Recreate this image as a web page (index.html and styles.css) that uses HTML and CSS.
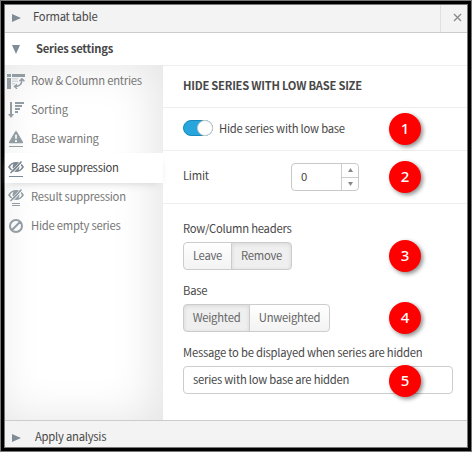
FILE: index.html
```html
<!DOCTYPE html>
<html lang="en">
<head>
<meta charset="utf-8">
<title>Series settings</title>
<link rel="stylesheet" href="styles.css">
</head>
<body>
<div class="frame">
  <header class="bar bar-top">
    <svg class="arrow" width="9" height="8" viewBox="0 0 9 8"><path d="M0 0 9 4 0 8z"/></svg>
    <span class="bar-title title-first">Format table</span>
    <button class="close" aria-label="Close"><svg width="9" height="9" viewBox="0 0 9 9"><path d="M1 1 8 8M8 1 1 8"/></svg></button>
  </header>
  <div class="bar bar-open">
    <svg class="arrow" width="8" height="9" viewBox="0 0 8 9"><path d="M0 0H8L4 9z"/></svg>
    <span class="bar-title title-open">Series settings</span>
  </div>
  <div class="body">
    <nav class="side">
      <div class="item"><svg class="icon" width="18" height="16" viewBox="0 0 18 16"><path class="f" d="M0 1h4v3H0zM5 1h13v3H5zM0 5h4v11H0z"/><path class="pale" d="M5 5h6v1.500H5zM5 7.500h6V9H5zM5 10h3v1.500H5z"/><path class="s thin" d="M8 13.500c4.500 0 7-2 7-7M10 11.200 7.500 13.500l2.500 2.300M12.500 8.300 15 5.700l2.400 2.600"/></svg><span class="label">Row &amp; Column entries</span></div>
      <div class="item"><svg class="icon" width="18" height="16" viewBox="0 0 18 16"><path class="f" d="M3 0h2v12h2l-3 4-3-4h2zM8 0h9v2H8zM8 3h7v2H8zM8 6h5v2H8zM8 9h3v2H8z"/></svg><span class="label">Sorting</span></div>
      <div class="item"><svg class="icon" width="18" height="18" viewBox="0 0 18 18"><path class="f" fill-rule="evenodd" d="M8 1.800Q9 .2 10 1.800L16 12q.6 1.200-.7 1.200H2.700Q1.400 13.200 2 12zM8 4.800 8.300 9h1.400L10 4.800zM8 10.200V12h2v-1.800z"/><path class="f" d="M2 16h14v1H2z"/></svg><span class="label">Base warning</span></div>
      <div class="item active"><svg class="icon" width="18" height="18" viewBox="0 0 18 18"><path class="f" fill-rule="evenodd" d="M1 8Q4 3 9 3T17 8Q14 13 9 13T1 8zM3 8Q4.300 10.500 6.400 11.200 4.600 8 6.400 4.800 4.300 5.500 3 8zM11.600 4.800Q13.400 8 11.600 11.200 13.700 10.500 15 8 13.700 5.500 11.600 4.800z"/><path class="cut" d="M3.300 13.200 13.500 2.300M5 14.700 15.200 3.800"/><path class="s" d="M3.500 14 14.500 2.500"/><path class="f" d="M2 17h14v1H2z"/></svg><span class="label">Base suppression</span></div>
      <div class="item"><svg class="icon" width="18" height="18" viewBox="0 0 18 18"><path class="f" fill-rule="evenodd" d="M1 7Q4 2 9 2T17 7Q14 12 9 12T1 7zM3 7Q4.300 9.500 6.400 10.200 4.600 7 6.400 3.800 4.300 4.500 3 7zM11.600 3.800Q13.400 7 11.600 10.200 13.700 9.500 15 7 13.700 4.500 11.600 3.800z"/><path class="cut" d="M3.300 12.200 13.500 1.300M5 13.700 15.200 2.800"/><path class="s" d="M3.500 13 14.500 1.500"/><path class="f" d="M5 15h8v1H5zM5 17h8v1H5z"/></svg><span class="label">Result suppression</span></div>
      <div class="item"><svg class="icon" width="18" height="16" viewBox="0 0 18 16"><path class="s wide" d="M15 8A6 6 0 1 1 3 8a6 6 0 0 1 12 0zM4.800 12.200 13.200 3.800"/></svg><span class="label">Hide empty series</span></div>
    </nav>
    <main class="main">
      <section class="row row-heading"><h2 class="heading">HIDE SERIES WITH LOW BASE SIZE</h2></section>
      <section class="row row-toggle">
        <span class="toggle"><span class="knob"></span></span>
        <span class="toggle-label">Hide series with low base</span>
        <span class="badge">1</span>
      </section>
      <section class="row row-limit">
        <span class="limit">Limit</span>
        <div class="spinner"><span class="value">0</span><span class="steps"><span class="step"><svg width="5" height="4" viewBox="0 0 5 4"><path d="M0 4 2.500 0 5 4z"/></svg></span><span class="step"><svg width="5" height="4" viewBox="0 0 5 4"><path d="M0 0H5L2.500 4z"/></svg></span></span></div>
        <span class="badge">2</span>
      </section>
      <section class="fields">
        <div class="field">
          <div class="caption"><span>Row/Column headers</span></div>
          <div class="group"><span class="btn b1">Leave</span><span class="btn b2 on">Remove</span></div>
          <span class="badge">3</span>
        </div>
        <div class="field">
          <div class="caption"><span>Base</span></div>
          <div class="group"><span class="btn b3 on">Weighted</span><span class="btn b4">Unweighted</span></div>
          <span class="badge">4</span>
        </div>
        <div class="field">
          <div class="caption"><span>Message to be displayed when series are hidden</span></div>
          <div class="input"><span>series with low base are hidden</span></div>
          <span class="badge">5</span>
        </div>
      </section>
    </main>
  </div>
  <footer class="bar bar-bottom">
    <svg class="arrow" width="9" height="8" viewBox="0 0 9 8"><path d="M0 0 9 4 0 8z"/></svg>
    <span class="bar-title title-last">Apply analysis</span>
  </footer>
</div>
</body>
</html>
```
FILE: styles.css
```css
* { box-sizing: border-box; }
body {
  margin: 0;
  background: #fff;
  color: #484848;
  font: 11.25px/18px "Noto Sans CJK SC", "Open Sans", sans-serif;
  letter-spacing: -.24px;
}
span, h2 { white-space: nowrap; }
svg { display: block; flex: none; }
.frame {
  width: 472px;
  height: 452px;
  border: 1px solid #777;
  box-shadow: inset 0 0 0 3px #000, inset 0 0 0 4px #777;
  padding: 4px;
  display: flex;
  flex-direction: column;
}
.bar { display: flex; align-items: center; flex: none; padding-left: 7px; }
.bar-title { padding-bottom: 3px; }
.arrow { fill: #7f8b95; }
.bar-top { height: 28px; background: #f3f3f3; border-bottom: 1px solid #ccc; }
.bar-top .arrow { margin-bottom: 2px; }
.title-first { margin-left: 12px; padding-bottom: 6px; }
.close {
  margin-left: auto;
  width: 27px;
  height: 27px;
  padding: 0 0 3px 12px;
  border: 0;
  border-left: 1px solid #e0e0e0;
  background: none;
  display: flex;
  align-items: center;
}
.close path { fill: none; stroke: #8b8b8b; stroke-width: 1.4; }
.bar-open { height: 32px; }
.title-open { margin-left: 16px; font-weight: 700; padding-bottom: 2px; }
.title-last { margin-left: 14px; }
.bar-bottom { height: 27px; background: #f3f3f3; border-top: 1px solid #ccc; padding-top: 7px; }
.body { display: flex; height: 355px; }
.side {
  width: 158px;
  flex: none;
  padding-top: 1px;
  background: #fff;
  box-shadow: inset -8px 0 45px #e4e4e4;
}
.item {
  display: flex;
  align-items: center;
  height: 29px;
  padding-left: 2px;
  color: #777;
}
.label { padding-bottom: 2px; }
.icon { margin-right: 6px; fill: none; }
.f { fill: #929ca3; }
.pale { fill: #d3d7da; }
.s { stroke: #929ca3; stroke-width: 1.5; }
.thin { stroke-width: 1.4; }
.wide { stroke-width: 2; }
.cut { stroke: #fff; stroke-width: 1; }
.active {
  position: relative;
  height: 30px;
  margin-bottom: -1px;
  background: #fff;
  color: #444;
  box-shadow: 0 4px 8px -4px #ccc;
}
.active .f { fill: #7b8791; }
.active .s { stroke: #7b8791; }
.main { flex: 1; border-top: 1px solid #eee; }
.row {
  display: flex;
  align-items: center;
  position: relative;
  padding-left: 20px;
  border-bottom: 1px solid #eee;
}
.row-heading { height: 42px; }
.heading { margin: 0; font-size: 11.2px; line-height: 18px; font-weight: 700; padding-bottom: 3px; }
.row-toggle { height: 43px; padding-bottom: 2px; }
.toggle {
  width: 30px;
  height: 16px;
  border-radius: 8px;
  background: #27a5dc;
  border: 1px solid #168bb9;
  display: flex;
  justify-content: flex-end;
}
.knob { width: 16px; height: 16px; margin: -1px; border-radius: 50%; background: #fff; border: 1px solid #ccc; }
.toggle-label { margin-left: 6px; padding-bottom: 1px; }
.row-limit { height: 53px; }
.limit { width: 108px; padding-bottom: 4px; }
.spinner {
  display: flex;
  width: 68px;
  height: 28px;
  border: 1px solid #c8c8c8;
  border-radius: 4px;
}
.value { flex: 1; padding-left: 9px; line-height: 25px; }
.steps { width: 17px; border-left: 1px solid #ccc; display: flex; flex-direction: column; }
.step { flex: 1; display: flex; align-items: center; justify-content: center; }
.step + .step { border-top: 1px solid #ccc; }
.step path { fill: #888; }
.badge {
  position: absolute;
  left: 226px;
  top: 50%;
  width: 32px;
  height: 32px;
  margin-top: -16px;
  border-radius: 50%;
  background: #f00;
  color: #fff;
  font: 500 15px/31px "Noto Sans", sans-serif;
  letter-spacing: 0;
  text-align: center;
  box-shadow: 2px 2px 4px rgba(0, 0, 0, .45);
}
.fields { padding: 15px 0 0 20px; }
.field { position: relative; height: 62px; }
.caption { height: 23px; }
.group { display: flex; }
.btn {
  height: 28px;
  border: 1px solid #ccc;
  line-height: 25px;
  text-align: center;
  color: #666;
  background: linear-gradient(#fff, #f3f3f3);
}
.btn:first-child { border-radius: 4px 0 0 4px; }
.btn:last-child { border-radius: 0 4px 4px 0; }
.btn + .btn { margin-left: -1px; }
.btn.on { background: #efefef; box-shadow: inset 0 1px 4px rgba(0, 0, 0, .1); }
.b1 { width: 49px; }
.b2 { width: 61px; }
.b3 { width: 67px; }
.b4 { width: 81px; }
.input {
  width: 270px;
  height: 28px;
  border: 1px solid #ccc;
  border-radius: 4px;
  padding-left: 9px;
  line-height: 25px;
}
.field .badge { left: 206px; top: 37px; }
.field:last-child .badge { top: 38px; }
```
